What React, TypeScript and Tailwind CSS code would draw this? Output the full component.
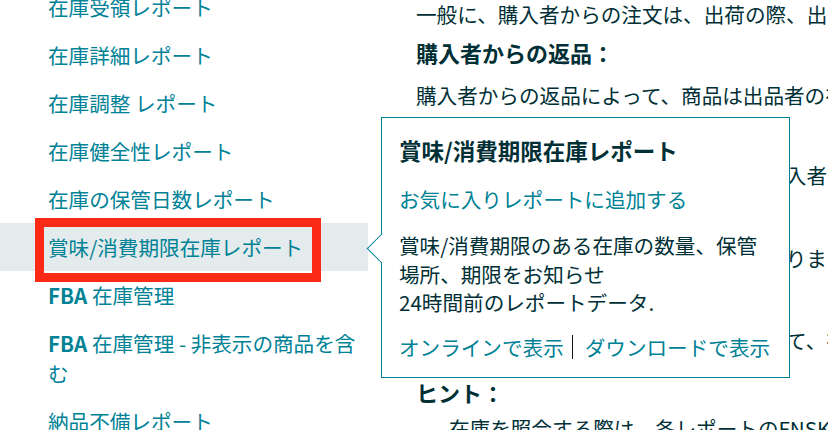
const REPORTS = [
  "在庫受領レポート",
  "在庫詳細レポート",
  "在庫調整 レポート",
  "在庫健全性レポート",
  "在庫の保管日数レポート",
  "賞味/消費期限在庫レポート",
  "FBA 在庫管理",
  "FBA 在庫管理 - 非表示の商品を含む",
  "納品不備レポート",
]

const ACTIVE = "賞味/消費期限在庫レポート"

// 本文 (ポップオーバーの下に隠れる部分も含む)
const LINES: { text: string; bold?: boolean; cls: string }[] = [
  { text: "一般に、購入者からの注文は、出荷の際、出品者の在庫から差し引かれます。", cls: "" },
  { text: "購入者からの返品：", bold: true, cls: "mt-[-2px]" },
  { text: "購入者からの返品によって、商品は出品者の在庫に戻ります。", cls: "mt-[3px]" },
  { text: "出品者による返品：", bold: true, cls: "" },
  { text: "出品者が返品を受け取ると、在庫数は購入者の返品分だけ増加します。", cls: "" },
  { text: "在庫の調整：", bold: true, cls: "" },
  { text: "返品された商品は、出品者の在庫へと戻ります。", cls: "mt-[3px]" },
  { text: "返品状況の確認：", bold: true, cls: "mt-[2px]" },
  { text: "返品の状況は、各返品レポートを確認して、在庫と照合してください。", cls: "" },
  { text: "ヒント：", bold: true, cls: "mt-[12px]" },
  { text: "在庫を照合する際は、各レポートのFNSKUを確認してください。", cls: "mt-[-4px] pl-[33px]" },
]

function Label({ text }: { text: string }) {
  if (!text.startsWith("FBA")) return <>{text}</>
  return (
    <>
      <span className="font-semibold">FBA</span>
      {text.slice(3).replace(" - ", " -  ")}
    </>
  )
}

export default function App() {
  return (
    <div className="relative w-[828px] h-[430px] overflow-hidden bg-white flex font-['Noto_Sans_CJK_JP',sans-serif]">

      {/* サイドバー */}
      <nav className="w-[368px] shrink-0 flex flex-col mt-[-17px]">
        {REPORTS.map(r => (
          <div
            key={r}
            className={`py-[9px] pl-[48px] pr-[6px] text-[20.6px] leading-[30px] text-[#008296] ${
              r === ACTIVE ? "bg-[#e3ebec]" : ""
            }`}
          >
            <Label text={r} />
          </div>
        ))}
      </nav>

      {/* 本文 */}
      <main className="flex flex-col pl-[48px] mt-[-6px] text-[#002f36] whitespace-nowrap">
        {LINES.map((l, i) => (
          <div
            key={i}
            className={`leading-[40px] ${l.bold ? "font-bold text-[22px]" : "text-[20.6px]"} ${l.cls}`}
          >
            {l.text}
          </div>
        ))}
      </main>

      {/* 赤枠 (注釈) */}
      <div className="absolute left-[35px] top-[218px] w-[286px] h-[64px] border-[9px] border-[#fa2a17]" />

      {/* ポップオーバー */}
      <div className="absolute left-[381px] top-[117px] w-[409px] h-[261px] border border-[#008296] bg-white pl-[17px] pt-[17px]">
        <div className="absolute left-[-11px] top-[120px] w-[21px] h-[21px] rotate-45 bg-white border-l border-b border-[#008296]" />
        <p className="relative text-[22.5px] leading-[30px] font-bold text-[#002f36]">賞味/消費期限在庫レポート</p>
        <p className="relative mt-[19px] text-[20.6px] leading-[30px] text-[#008296]">お気に入りレポートに追加する</p>
        <p className="relative mt-[17px] text-[20.6px] leading-[28.5px] text-[#002f36]">
          賞味/消費期限のある在庫の数量、保管
          <br />
          場所、期限をお知らせ
          <br />
          24時間前のレポートデータ.
        </p>
        <div className="relative mt-[15px] flex items-center text-[20.6px] leading-[30px] text-[#008296]">
          <span>オンラインで表示</span>
          <span className="ml-[8px] mr-[12px] w-px h-[24px] bg-[#111]" />
          <span>ダウンロードで表示</span>
        </div>
      </div>
    </div>
  )
}
